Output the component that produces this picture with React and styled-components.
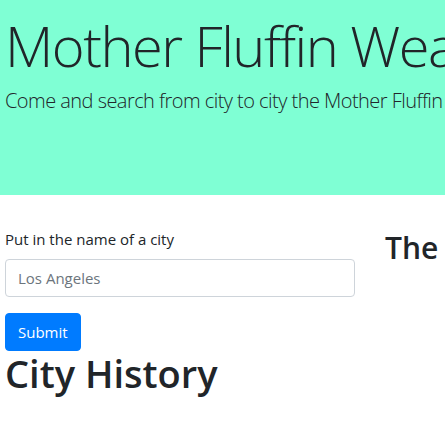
import React from 'react';
import styled, { createGlobalStyle } from 'styled-components';

const GlobalStyle = createGlobalStyle`
    body {
        margin: 0;
        font-family: "Open Sans", "Noto Sans", sans-serif;
        color: #212529;
        background: #fff;
        overflow: hidden;
    }
    * { box-sizing: border-box; }
`;

const Jumbotron = styled.header`
    background: #7fffd4;
    height: 195px;
    padding: 12px 5px 0;
    white-space: nowrap;
    overflow: hidden;
`;

const Title = styled.h1`
    margin: 0 0 7px;
    font-size: 56px;
    font-weight: 300;
    line-height: 1.2;
    letter-spacing: -1.5px;
`;

const Lead = styled.p`
    margin: 0;
    font-size: 20px;
    font-weight: 300;
    line-height: 1.5;
    letter-spacing: -0.54px;
`;

const Row = styled.main`
    display: flex;
    gap: 30px;
    padding: 32px 5px 0;
`;

const FormCol = styled.form`
    width: 350px;
    flex-shrink: 0;
`;

const Label = styled.label`
    display: block;
    font-size: 15px;
    line-height: 24px;
    margin-bottom: 8px;
`;

const Input = styled.input`
    display: block;
    width: 100%;
    height: 38px;
    padding: 6px 12px;
    font: inherit;
    font-size: 15px;
    color: #495057;
    border: 1px solid #ced4da;
    border-radius: 4px;

    &::placeholder {
        color: #6c757d;
    }
`;

const Button = styled.button`
    margin-top: 16px;
    height: 38px;
    padding: 0 12px;
    font: inherit;
    font-size: 15px;
    color: #fff;
    background: #007bff;
    border: 1px solid #007bff;
    border-radius: 4px;
`;

const SideCol = styled.section`
    white-space: nowrap;
    padding-top: 3px;
`;

const SideTitle = styled.h2`
    margin: 0;
    font-size: 30px;
    font-weight: 600;
    line-height: 1.2;
`;

const HistoryTitle = styled.h1`
    margin: 0 5px;
    font-size: 38px;
    font-weight: 600;
    line-height: 1.2;
`;

const App = () => {
    return (
        <>
            <GlobalStyle />
            <Jumbotron>
                <Title>Mother Fluffin Weather Dashboard</Title>
                <Lead>Come and search from city to city the Mother Fluffin weather</Lead>
            </Jumbotron>
            <Row>
                <FormCol onSubmit={(e) => e.preventDefault()}>
                    <Label htmlFor="city">Put in the name of a city</Label>
                    <Input id="city" placeholder="Los Angeles" />
                    <Button type="submit">Submit</Button>
                </FormCol>
                <SideCol>
                    <SideTitle>The Weather</SideTitle>
                </SideCol>
            </Row>
            <HistoryTitle>City History</HistoryTitle>
        </>
    );
};

export default App;
